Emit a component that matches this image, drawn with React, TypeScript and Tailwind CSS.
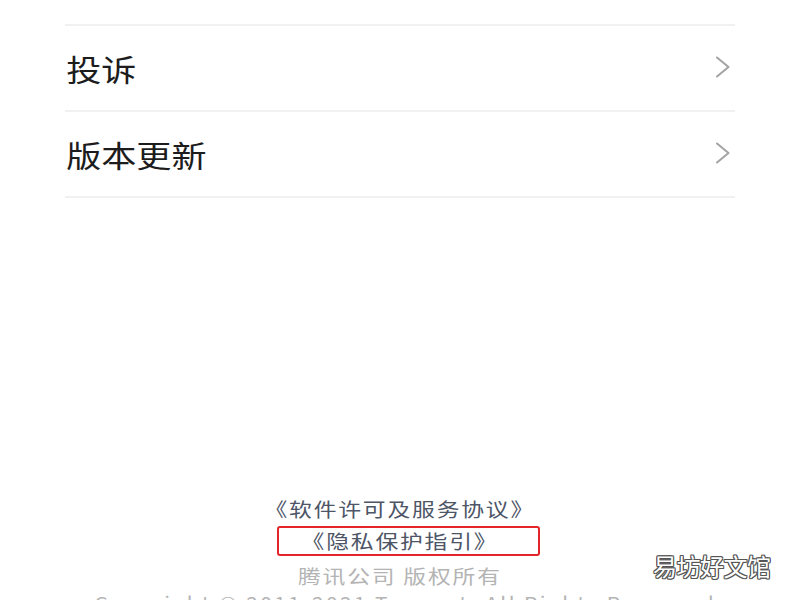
import React from "react";

const Chevron = () => (
  <svg width="16" height="22" viewBox="0 0 16 22" fill="none">
    <path d="M2 1.5 L13.5 11 L2 20.5" stroke="#a3a3a3" strokeWidth="2" strokeLinecap="round" strokeLinejoin="round" />
  </svg>
);

const Row = ({ label }: { label: string }) => (
  <div className="h-[84px] flex items-center justify-between">
    <span className="inline-block origin-left scale-x-[1.17] text-[30px] leading-none tracking-[0px] text-[#1c1c1c] pl-[1px]">
      {label}
    </span>
    <div className="mr-[4px] mt-[-2px]">
      <Chevron />
    </div>
  </div>
);

export default function App() {
  return (
    <div
      className="w-[800px] h-[600px] overflow-hidden bg-white relative"
      style={{ fontFamily: '"Noto Sans CJK SC", "Noto Sans", sans-serif' }}
    >
      <div className="mx-[65px] pt-[24px]">
        <div className="h-[2px] bg-[#f1f1f1]" />
        <Row label="投诉" />
        <div className="h-[2px] bg-[#f1f1f1]" />
        <Row label="版本更新" />
        <div className="h-[2px] bg-[#f1f1f1]" />
      </div>
      <div className="mt-[295px] flex flex-col items-center">
        <div className="h-[32px] leading-[32px] text-[19px] tracking-[1.5px] text-[#4d5566] scale-x-[1.2]">
          《软件许可及服务协议》
        </div>
        <div className="relative w-full h-[34px] leading-[32px] text-[19px] text-[#4d5566] text-center">
          <span className="inline-block tracking-[1.5px] scale-x-[1.2]">《隐私保护指引》</span>
          <div className="absolute left-[277px] top-[1px] w-[263px] h-[30px] border-2 border-[#e3252a] rounded-[3px]" />
        </div>
        <div className="h-[28px] leading-[34px] text-[19px] tracking-[1.5px] text-[#b4b4b4] scale-x-[1.2]">
          腾讯公司 版权所有
        </div>
        <div className="mt-[4px] h-[24px] leading-[24px] text-[19px] tracking-[2.2px] text-[#b4b4b4] scale-x-[1.1] translate-x-[9px]">
          Copyright © 2011-2021 Tencent. All Rights Reserved.
        </div>
      </div>
      <div className="absolute left-[653px] top-[551px] text-[24px] leading-[30px] tracking-[-0.5px] text-white [text-shadow:1px_0_#555,-1px_0_#555,0_1px_#555,0_-1px_#555,1px_1px_#555,-1px_-1px_#555,1px_-1px_#555,-1px_1px_#555]">
        易坊好文馆
      </div>
    </div>
  );
}
